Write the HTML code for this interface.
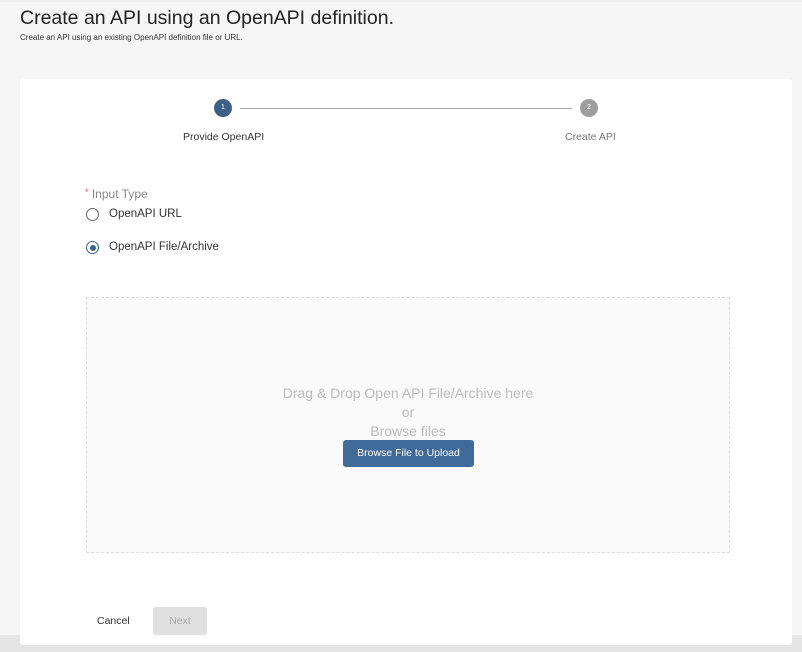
<!DOCTYPE html>
<html><head><style>
body{margin:0;width:802px;height:652px;background:#f6f6f6;font-family:"Liberation Sans",sans-serif;position:relative;overflow:hidden}
.top{position:absolute;left:0;top:0;width:802px;height:2px;background:#ececec}
.bot{position:absolute;left:0;top:635px;width:802px;height:17px;background:#e6e6e6}
h1{position:absolute;left:20px;top:7px;margin:0;font-weight:normal;font-size:19.5px;color:#222}
.sub{position:absolute;left:20px;top:33px;font-size:8px;color:#333}
.card{position:absolute;left:20px;top:79px;width:772px;height:566px;background:#fff;border-radius:3px}
.c{position:absolute;width:18px;height:18px;border-radius:50%;color:#fff;font-size:7px;text-align:center;line-height:18px}
.t{position:absolute;font-size:10.5px;color:#333}
</style></head><body>
<div class="top"></div><div class="bot"></div>
<h1>Create an API using an OpenAPI definition.</h1>
<div class="sub">Create an API using an existing OpenAPI definition file or URL.</div>
<div class="card">
<div class="c" style="left:194px;top:20px;background:#3d6089">1</div>
<div style="position:absolute;left:220px;top:29px;width:332px;height:1px;background:#aaa"></div>
<div class="c" style="left:560px;top:20px;background:#9e9e9e">2</div>
<div class="t" style="left:163px;top:52px">Provide OpenAPI</div>
<div class="t" style="left:545px;top:52px;color:#777">Create API</div>
<div class="t" style="left:65px;top:108px;color:#888;font-size:12px"><span style="color:#e55;font-size:9px;vertical-align:top">*</span> Input Type</div>
<div style="position:absolute;left:66px;top:129px;width:11px;height:11px;border:1.5px solid #666;border-radius:50%"></div>
<div class="t" style="left:89px;top:129px;font-size:11.5px">OpenAPI URL</div>
<div style="position:absolute;left:66px;top:162px;width:11px;height:11px;border:1.5px solid #3d6089;border-radius:50%"><div style="margin:2.5px;width:6px;height:6px;border-radius:50%;background:#3d6089"></div></div>
<div class="t" style="left:89px;top:162px;font-size:11.5px">OpenAPI File/Archive</div>
<div style="position:absolute;left:66px;top:218px;width:642px;height:254px;border:1px dashed #ddd;background:#fafafa"></div>
<div style="position:absolute;left:66px;top:305px;width:644px;text-align:center;font-size:14px;color:#bbb;line-height:19px">Drag &amp; Drop Open API File/Archive here<br>or<br>Browse files</div>
<div style="position:absolute;left:323px;top:361px;width:131px;height:27px;background:#3f6a9a;border-radius:3px;color:#fff;font-size:10.5px;text-align:center;line-height:27px">Browse File to Upload</div>
<div class="t" style="left:77px;top:536px">Cancel</div>
<div style="position:absolute;left:133px;top:528px;width:54px;height:28px;background:#e0e0e0;border-radius:3px;color:#aaa;font-size:10.5px;text-align:center;line-height:28px">Next</div>
</div>
</body></html>
